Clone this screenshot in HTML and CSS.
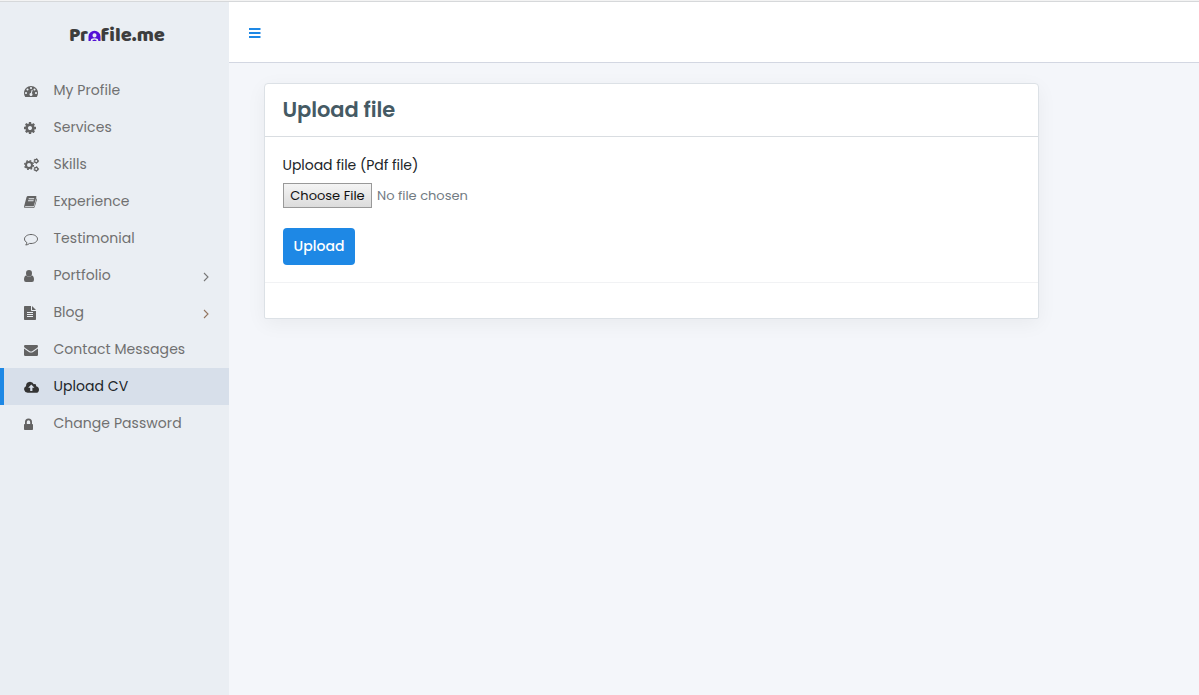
FILE: index.html
```html
<!DOCTYPE html>
<html lang="en">
<head>
<meta charset="utf-8">
<title>Profile.me</title>
<link rel="stylesheet" href="styles.css">
</head>
<body>
<div class="app">
  <aside class="sidebar">
    <div class="brand">
      <svg class="logo" width="100" height="32" viewBox="0 0 100 32" role="img" aria-label="Profile.me">
        <text class="logo-text" x="0" y="22" textLength="19" lengthAdjust="spacingAndGlyphs">Pr</text>
        <path class="logo-mark" fill-rule="evenodd" d="M19.500 22v-4.500a6 5.800 0 0 1 12 0V22H29.400l-.6-2q-1.300-.8-3.300-.8t-3.300.8l-.6 2zM25.500 14.300a2 2.100 0 1 0 .01 0z"/>
        <path class="logo-mark" d="M23.300 22q0-1.500 2.200-1.500t2.200 1.500z"/>
        <text class="logo-text" x="31.500" y="22" textLength="64.500" lengthAdjust="spacingAndGlyphs">file.me</text>
      </svg>
    </div>
    <nav class="menu">
      <a class="item"><svg class="icon" viewBox="0 0 1792 1792"><path d="M384 1152q0-53-37.500-90.500t-90.500-37.500-90.500 37.500-37.500 90.500 37.500 90.500 90.500 37.500 90.500-37.500 37.500-90.500zm192-448q0-53-37.500-90.500t-90.500-37.500-90.500 37.500-37.500 90.500 37.500 90.500 90.500 37.500 90.500-37.500 37.500-90.500zm428 481l101-382q6-26-7.500-48.500t-38.500-29.500-48 6.500-30 39.500l-101 382q-60 5-107 43.500t-63 98.500q-20 77 20 146t117 89 146-20 89-117q16-60-6-117t-72-91zm660-33q0-53-37.500-90.500t-90.500-37.500-90.500 37.500-37.500 90.500 37.500 90.500 90.500 37.500 90.500-37.500 37.500-90.500zm-640-640q0-53-37.500-90.500t-90.500-37.500-90.500 37.500-37.500 90.500 37.500 90.500 90.500 37.500 90.500-37.500 37.500-90.500zm448 192q0-53-37.500-90.500t-90.500-37.500-90.500 37.500-37.500 90.500 37.500 90.500 90.500 37.500 90.500-37.500 37.500-90.500zm320 448q0 261-141 483-19 29-54 29h-1402q-35 0-54-29-141-221-141-483 0-182 71-348t191-286 286-191 348-71 348 71 286 191 191 286 71 348z"/></svg><span class="label">My Profile</span></a>
      <a class="item"><svg class="icon" viewBox="128 0 1792 1792"><path d="M1152 896q0-106-75-181t-181-75-181 75-75 181 75 181 181 75 181-75 75-181zm512-109v222q0 12-8 23t-20 13l-185 28q-19 54-39 91 35 50 107 138 10 12 10 25t-9 23q-27 37-99 108t-94 71q-12 0-26-9l-138-108q-44 23-91 38-16 136-29 186-7 28-36 28h-222q-14 0-24.500-8.500t-11.500-21.500l-28-184q-49-16-90-37l-141 107q-10 9-25 9-14 0-25-11-126-114-165-168-7-10-7-23 0-12 8-23 15-21 51-66.500t54-70.500q-27-50-41-99l-183-27q-13-2-21-12.500t-8-23.500v-222q0-12 8-23t19-13l186-28q14-46 39-92-40-57-107-138-10-12-10-24 0-10 9-23 26-36 98.500-107.500t94.500-71.500q13 0 26 10l138 107q44-23 91-38 16-136 29-186 7-28 36-28h222q14 0 24.500 8.500t11.500 21.500l28 184q49 16 90 37l142-107q9-9 24-9 13 0 25 10 129 119 165 170 7 8 7 22 0 12-8 23-15 21-51 66.500t-54 70.500q26 50 41 98l183 28q13 2 21 12.500t8 23.500z"/></svg><span class="label">Services</span></a>
      <a class="item"><svg class="icon" viewBox="0 0 14 14"><g class="gear"><circle cx="5" cy="7" r="3" stroke-width="2"/><circle cx="5" cy="7" r="4.400" stroke-width="1.400" stroke-dasharray="1.730 1.726"/><circle cx="12.200" cy="3" r="1.600" stroke-width="1.200"/><circle cx="12.200" cy="3" r="2.400" stroke-width=".9" stroke-dasharray="1.260 1.253"/><circle cx="12.200" cy="11" r="1.600" stroke-width="1.200"/><circle cx="12.200" cy="11" r="2.400" stroke-width=".9" stroke-dasharray="1.260 1.253"/></g></svg><span class="label">Skills</span></a>
      <a class="item"><svg class="icon" viewBox="0 0 14 14"><path fill-rule="evenodd" d="M4 1h7.700q1 0 .7 1.100L10 10.400q-.3.900-1.200.9H1.700q-.8 0-.8.500.1.500.8.500h7.500q.7 0 1-.8l2.400-8.200q.7.300.4 1.200l-2.300 7.600q-.4 1-1.500 1H1.700Q-.4 13.100.1 11.200L2.500 2.300Q2.900 1 4 1zM4.800 3.200l-.3 1h5.500l.3-1zM4.200 5.300l-.3 1h5.500l.3-1z"/></svg><span class="label">Experience</span></a>
      <a class="item"><svg class="icon" viewBox="0 0 14 14"><path class="outline" d="M7 2.500c3.600 0 6.500 2 6.500 4.500s-2.900 4.500-6.500 4.500l-1.500-.1Q4 12.900 1.700 13q1.200-1 1.200-2.400C1.400 9.700.5 8.500.5 7 .5 4.500 3.400 2.500 7 2.500z"/></svg><span class="label">Testimonial</span></a>
      <a class="item"><svg class="icon" viewBox="0 0 14 14"><path d="M5 1a3 3.200 0 0 1 3 3.200A3 3.200 0 0 1 5 7.400a3 3.200 0 0 1-3-3.200A3 3.200 0 0 1 5 1zM2.300 6.600a3.600 3.600 0 0 0 5.400 0Q10 6.800 10 10.800q0 2.200-2 2.200H2q-2 0-2-2.200 0-4 2.300-4.200z"/></svg><span class="label">Portfolio</span><svg class="chevron" viewBox="0 0 6 10"><path d="M1 1l4 4-4 4"/></svg></a>
      <a class="item"><svg class="icon" viewBox="0 0 14 14"><path fill-rule="evenodd" d="M.8 0H7v4.200q0 .8.800.8H12v8.200q0 .8-.8.800H.8q-.8 0-.8-.8V.8Q0 0 .8 0zM8 0l4 4H8zM3 6v1h6V6zM3 8v1h6V8zM3 10v1h6v-1z"/></svg><span class="label">Blog</span><svg class="chevron warm" viewBox="0 0 6 10"><path d="M1 1l4 4-4 4"/></svg></a>
      <a class="item"><svg class="icon" viewBox="0 0 14 14"><path d="M1.200 2h11.600q1.200 0 1.200 1.200Q14 4.300 12.900 5L8.600 8Q7 9.200 5.400 8L1.100 5Q0 4.300 0 3.200 0 2 1.200 2zM0 5.500l4.900 3.400q2.100 1.400 4.200 0L14 5.500v6.300q0 1.200-1.200 1.200H1.200Q0 13 0 11.800z"/></svg><span class="label">Contact Messages</span></a>
      <a class="item active"><svg class="icon" viewBox="0 0 14 14"><path fill-rule="evenodd" d="M3.600 12.800A3.500 3.500 0 0 1 2 6.200Q1.900 2 6 1.700q2.800 0 3.800 2.500 2.600-.8 2.400 2Q15 6.900 15 9.700q-.1 3.100-3 3.100zM7.300 4.500L4.200 7.700h2v3.200h2.200V7.700h2z"/></svg><span class="label">Upload CV</span></a>
      <a class="item"><svg class="icon" viewBox="0 0 14 14"><path fill-rule="evenodd" d="M.8 7H1V5a3.500 3.500 0 0 1 7 0v2h.2q.8 0 .8.800v4.400q0 .8-.8.800H.8q-.8 0-.8-.8V7.800Q0 7 .8 7zM2.800 7h3.400V5a1.700 1.700 0 0 0-3.400 0z"/></svg><span class="label">Change Password</span></a>
    </nav>
  </aside>
  <main class="main">
    <header class="topbar"><svg class="bars" width="12" height="10" viewBox="0 0 12 10"><path d="M0 0h11.500v2H0zM0 4h11.500v2H0zM0 8h11.500v2H0z"/></svg></header>
    <section class="card">
      <h1 class="card-title">Upload file</h1>
      <form class="card-body">
        <label class="field-label">Upload file (Pdf file)</label>
        <div class="file-row"><span class="choose">Choose File</span><span class="no-file">No file chosen</span></div>
        <button class="submit" type="button">Upload</button>
      </form>
      <footer class="card-footer"></footer>
    </section>
  </main>
</div>
</body>
</html>
```
FILE: styles.css
```css
* { box-sizing: border-box; }
body { margin: 0; font-family: Poppins, Inter, sans-serif; background: #f4f6fa; }
.app { display: flex; height: 695px; border-top: 1px solid #f3f3f3; overflow: hidden; }
.sidebar { width: 229px; background: #eaeef3; border-top: 1px solid #d6d8da; }
.brand { height: 70px; padding: 17px 0 0 68.500px; }
.logo { display: block; overflow: visible; }
.logo-text { font-family: "Baloo 2", Baloo, Lato, sans-serif; font-weight: 800; font-size: 19.500px; fill: #3d3d3d; }
.logo-mark { fill: #5412d6; }
.menu { display: flex; flex-direction: column; }
.item { display: flex; align-items: center; height: 37px; padding: 0 20px; border-left: 4px solid transparent; color: #707070; font-size: 14px; letter-spacing: .06px; }
.item.active { background: #d7dfea; border-left-color: #1e88e5; color: #212529; }
.icon { width: 14px; height: 14px; margin: 1px 15.400px 0 0; fill: #636363; overflow: visible; flex: none; }
.active .icon { fill: #333; }
.gear { fill: none; stroke: #636363; }
.outline { fill: none; stroke: #636363; stroke-width: 1; }
.label { white-space: nowrap; line-height: 21px; margin-bottom: 1px; }
.chevron { width: 6px; height: 10px; margin: 2px 0 0 auto; fill: none; stroke: #777; stroke-width: 1.100; }
.warm { stroke: #94755f; }
.main { flex: 1; border-top: 1px solid #d6d8da; }
.topbar { height: 61px; background: #fff; border-bottom: 1px solid #d3d7e2; padding: 26px 0 0 20px; }
.bars { display: block; fill: #1e88e5; }
.card { width: 775px; height: 236px; margin: 20px 0 0 35px; background: #fff; border: 1px solid #dce1e6; border-radius: 4px 4px 2px 2px; box-shadow: 0 5px 20px rgba(0,0,0,.05); }
.card-title { height: 53px; margin: 0; padding: 0 17.500px; border-bottom: 1px solid #d9dde1; font-size: 21px; line-height: 52px; font-weight: 600; letter-spacing: -.08px; color: #455a64; }
.card-body { height: 145px; padding: 17px 18px 0; }
.field-label { display: block; height: 22px; margin-left: -.5px; font-size: 14px; line-height: 22px; letter-spacing: -.04px; color: #212529; white-space: nowrap; }
.file-row { display: flex; align-items: center; height: 25px; margin-top: 7px; gap: 5px; font-size: 13px; color: #727b83; }
.choose { display: flex; align-items: center; justify-content: center; width: 89px; height: 25px; border: 1px solid #999; background: linear-gradient(#f4f4f4, #dcdcdc); color: #111; }
.submit { display: block; margin: 20px 0 0; width: 72px; height: 37px; padding: 0; border: 0; border-radius: 4px; background: #1e88e5; color: #fff; font-family: inherit; font-size: 14px; font-weight: 500; }
.card-footer { height: 36px; border-top: 1px solid #f1f2f4; }
```
